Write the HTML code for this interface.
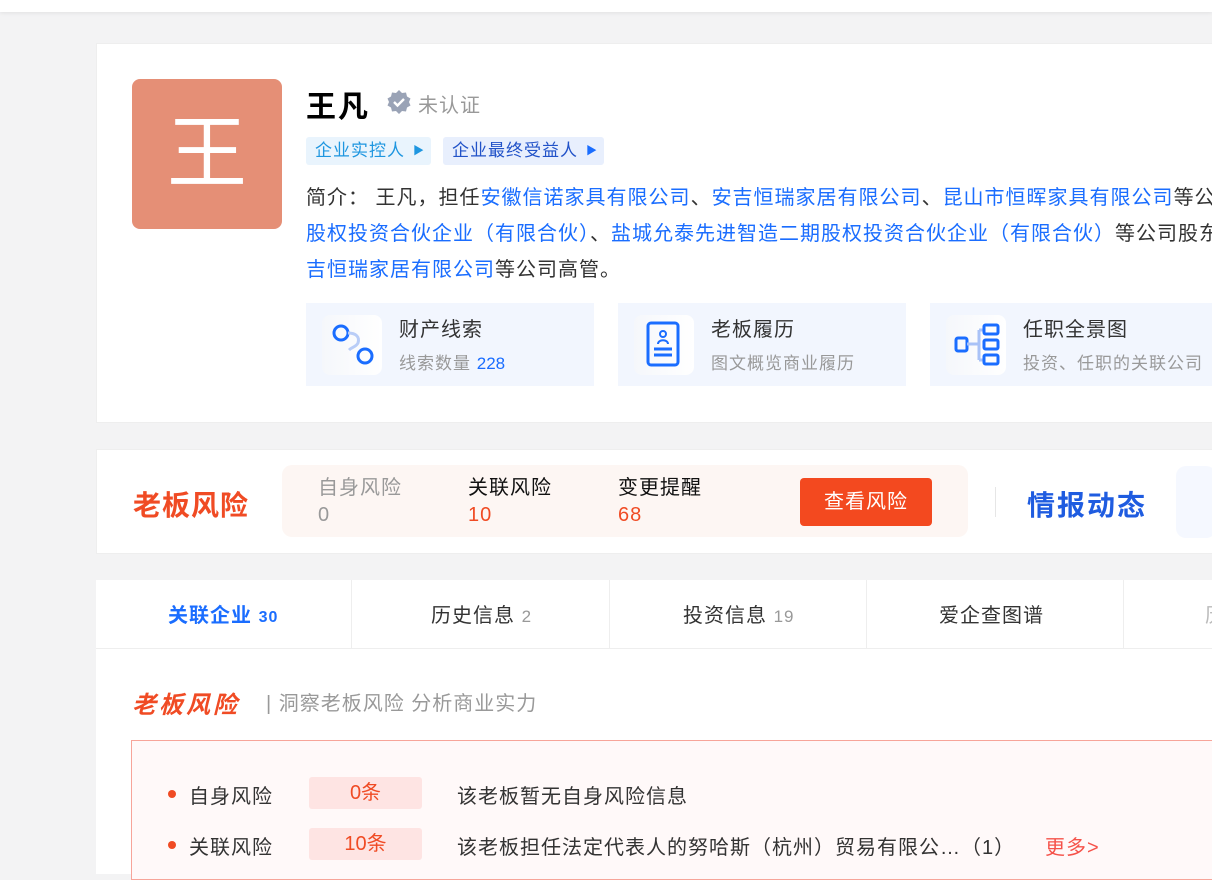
<!DOCTYPE html>
<html><head><meta charset="utf-8">
<style>
*{margin:0;padding:0;box-sizing:border-box}
body{width:1212px;height:874px;overflow:hidden;background:#f3f3f4;font-family:"Liberation Sans","Noto Sans CJK SC",sans-serif;color:#333;position:relative}
.a{position:absolute;white-space:nowrap;letter-spacing:1px}
.top{left:0;top:0;width:1212px;height:12px;background:#fff;box-shadow:0 1px 4px rgba(0,0,0,.08)}
.card{background:#fff}
.blue{color:#1a6dff}
.box{top:303px;height:83px;width:288px;background:#f2f6fe}
.ic{left:16px;top:12px;width:60px;height:60px;background:linear-gradient(90deg,#f5f7fb,#fff);border-radius:8px}
.bt{left:93px;top:10px;font-size:20px;color:#333}
.bs{left:93px;top:46px;font-size:17px;color:#999}
.t20{font-size:20px}
</style></head><body>
<div class="a top"></div>
<div class="a card" style="left:96px;top:43px;width:1116px;height:380px;border:1px solid #eee;border-right:none"></div>
<div class="a" style="left:132px;top:79px;width:150px;height:150px;background:#e58f76;border-radius:8px;color:#fff;font-size:80px;line-height:150px;text-align:center;letter-spacing:0">王</div>
<div class="a" style="left:306px;top:82px;font-size:30px;font-weight:bold;color:#000;letter-spacing:2px">王凡</div>
<svg class="a" style="left:386px;top:89px" width="26" height="26" viewBox="0 0 26 26"><path d="M13 1l3 3 4-.5 1 4 3.5 2-1.5 3.5 1.5 3.5-3.5 2-1 4-4-.5-3 3-3-3-4 .5-1-4L1.5 16.5 3 13 1.5 9.5 5 7.5l1-4 4 .5z" fill="#9aa3b6"/><path d="M8 13l3.5 3.5L18 10" stroke="#fff" stroke-width="2.4" fill="none"/></svg>
<div class="a" style="left:418px;top:89px;font-size:20px;color:#999">未认证</div>
<div class="a" style="left:306px;top:137px;width:125px;height:28px;background:#e9f4fd;border-radius:3px;color:#1e96e0;font-size:17px;line-height:28px;padding-left:9px">企业实控人 <span style="font-size:11px;position:absolute;right:6px">▶</span></div>
<div class="a" style="left:443px;top:137px;width:161px;height:28px;background:#e8effd;border-radius:3px;color:#2152c8;font-size:17px;line-height:28px;padding-left:9px">企业最终受益人 <span style="font-size:11px;position:absolute;right:6px;color:#1a6dff">▶</span></div>
<div class="a" style="left:306px;top:180px;font-size:20px;line-height:36px;color:#333">简介： 王凡，担任<span class="blue">安徽信诺家具有限公司</span>、<span class="blue">安吉恒瑞家居有限公司</span>、<span class="blue">昆山市恒晖家具有限公司</span>等公司<br><span class="blue">股权投资合伙企业（有限合伙）</span>、<span class="blue">盐城允泰先进智造二期股权投资合伙企业（有限合伙）</span>等公司股东<br><span class="blue">吉恒瑞家居有限公司</span>等公司高管。</div>
<div class="a box" style="left:306px"><div class="a ic"><svg width="60" height="60"><circle cx="19" cy="18" r="7" fill="none" stroke="#1a6dff" stroke-width="3"/><circle cx="43" cy="41" r="7" fill="none" stroke="#1a6dff" stroke-width="3"/><path d="M26 18c8 0 12 4 10 10-2 4-6 4-9 7" stroke="#b9cdf7" stroke-width="3" fill="none"/></svg></div><div class="a bt">财产线索</div><div class="a bs">线索数量 <span class="blue" style="letter-spacing:0">228</span></div></div>
<div class="a box" style="left:618px"><div class="a ic"><svg width="60" height="60"><rect x="14" y="8" width="30" height="42" rx="3" fill="none" stroke="#1a6dff" stroke-width="3"/><circle cx="29" cy="19" r="3" fill="none" stroke="#1a6dff" stroke-width="2"/><path d="M24 29c0-5 10-5 10 0" stroke="#1a6dff" stroke-width="2" fill="none"/><path d="M20 34h18M20 40h18" stroke="#1a6dff" stroke-width="3"/></svg></div><div class="a bt">老板履历</div><div class="a bs">图文概览商业履历</div></div>
<div class="a box" style="left:930px;width:282px"><div class="a ic"><svg width="60" height="60"><rect x="10" y="23" width="11" height="13" rx="2" fill="none" stroke="#1a6dff" stroke-width="3"/><path d="M21 29h12M33 15v30M33 15h4M33 45h4" stroke="#a9c2f7" stroke-width="3" fill="none"/><rect x="38" y="10" width="14" height="9" rx="1.5" fill="none" stroke="#1a6dff" stroke-width="3"/><rect x="38" y="25" width="14" height="9" rx="1.5" fill="none" stroke="#1a6dff" stroke-width="3"/><rect x="38" y="40" width="14" height="9" rx="1.5" fill="none" stroke="#1a6dff" stroke-width="3"/></svg></div><div class="a bt">任职全景图</div><div class="a bs">投资、任职的关联公司</div></div>

<div class="a card" style="left:96px;top:449px;width:1116px;height:105px;border:1px solid #eee;border-right:none"></div>
<div class="a" style="left:133px;top:484px;font-size:28px;font-weight:bold;color:#f04b24;letter-spacing:1px">老板风险</div>
<div class="a" style="left:282px;top:465px;width:686px;height:72px;background:#fdf6f3;border-radius:10px"></div>
<div class="a t20" style="left:318px;top:475px;color:#999;line-height:27px">自身风险<br>0</div>
<div class="a t20" style="left:468px;top:475px;color:#111;line-height:27px">关联风险<br><span style="color:#f04b24">10</span></div>
<div class="a t20" style="left:618px;top:475px;color:#111;line-height:27px">变更提醒<br><span style="color:#f04b24">68</span></div>
<div class="a t20" style="left:800px;top:478px;width:132px;height:48px;background:#f3491f;border-radius:4px;color:#fff;line-height:48px;text-align:center">查看风险</div>
<div class="a" style="left:995px;top:487px;width:1px;height:30px;background:#e6e6e6"></div>
<div class="a" style="left:1027px;top:484px;font-size:28px;font-weight:bold;color:#1f5ce0;letter-spacing:2px">情报动态</div>
<div class="a" style="left:1176px;top:466px;width:40px;height:72px;background:#f5f8ff;border-radius:10px"></div>

<div class="a card" style="left:96px;top:580px;width:1116px;height:294px"></div>
<div class="a" style="left:96px;top:648px;width:1116px;height:1px;background:#eee"></div>
<div class="a" style="left:351px;top:580px;width:1px;height:68px;background:#eee"></div>
<div class="a" style="left:609px;top:580px;width:1px;height:68px;background:#eee"></div>
<div class="a" style="left:866px;top:580px;width:1px;height:68px;background:#eee"></div>
<div class="a" style="left:1123px;top:580px;width:1px;height:68px;background:#eee"></div>
<div class="a" style="left:168px;top:599px;font-size:20px;font-weight:bold;color:#1a6dff">关联企业 <span style="font-size:16px">30</span></div>
<div class="a t20" style="left:431px;top:599px;color:#333">历史信息 <span style="font-size:17px;color:#999">2</span></div>
<div class="a t20" style="left:683px;top:599px;color:#333">投资信息 <span style="font-size:17px;color:#999">19</span></div>
<div class="a t20" style="left:939px;top:599px;color:#333">爱企查图谱</div>
<div class="a t20" style="left:1205px;top:599px;color:#bbb">历</div>
<div class="a" style="left:132px;top:685px;font-size:24px;font-weight:bold;font-style:italic;color:#f04b24;letter-spacing:3px">老板风险</div>
<div class="a t20" style="left:266px;top:687px;color:#999">| 洞察老板风险 分析商业实力</div>
<div class="a" style="left:131px;top:740px;width:1090px;height:140px;border:1px solid #f7a59a;background:#fff9f9"></div>
<div class="a" style="left:168px;top:790px;width:8px;height:8px;border-radius:50%;background:#f04b24"></div>
<div class="a" style="left:168px;top:841px;width:8px;height:8px;border-radius:50%;background:#f04b24"></div>
<div class="a t20" style="left:189px;top:780px;color:#333">自身风险</div>
<div class="a t20" style="left:189px;top:831px;color:#333">关联风险</div>
<div class="a t20" style="left:309px;top:777px;width:113px;height:32px;background:#fee4e3;border-radius:3px;text-align:center;line-height:32px;color:#f04b24;letter-spacing:0">0条</div>
<div class="a t20" style="left:309px;top:828px;width:113px;height:32px;background:#fee4e3;border-radius:3px;text-align:center;line-height:32px;color:#f04b24;letter-spacing:0">10条</div>
<div class="a t20" style="left:457px;top:780px;color:#333">该老板暂无自身风险信息</div>
<div class="a t20" style="left:457px;top:831px;color:#333">该老板担任法定代表人的努哈斯（杭州）贸易有限公…（1）</div>
<div class="a t20" style="left:1045px;top:831px;color:#f5524a">更多&gt;</div>
</body></html>
